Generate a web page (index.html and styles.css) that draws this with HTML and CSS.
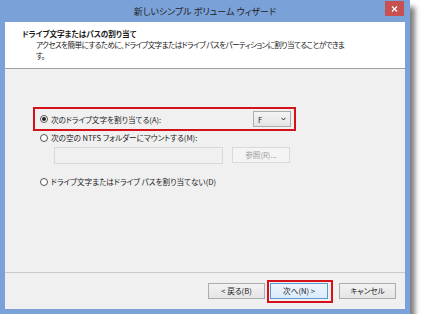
FILE: index.html
```html
<!doctype html>
<html lang="ja">
<head>
  <meta charset="utf-8" />
  <meta name="viewport" content="width=device-width,initial-scale=1" />
  <title>新しいシンプル ボリューム ウィザード</title>
  <link rel="stylesheet" href="styles.css">
</head>
<body>
  <div class="window">
    <!-- title bar -->
    <div class="titlebar">
      <span></span>
      <div class="title">新しいシンプル ボリューム ウィザード</div>
      <button class="close" type="button" aria-label="閉じる">
        <svg width="7" height="6" viewBox="0 0 7 6"><path d="M1 0.5 L6 5.5 M6 0.5 L1 5.5" stroke="#fff" stroke-width="1.3"/></svg>
      </button>
    </div>

    <div class="content">
      <div class="header">
        <div class="heading">ドライブ文字またはパスの割り当て</div>
        <p class="desc">アクセスを簡単にするために、ドライブ文字またはドライブ パスをパーティションに割り当てることができます。</p>
      </div>

      <div class="options">
        <div class="pick mark">
          <label class="radio"><span class="dot on"></span>次のドライブ文字を割り当てる(A):</label>
          <div class="select">
            <span>F</span>
            <svg width="5" height="4" viewBox="0 0 5 4"><path d="M0.5 0.8 L2.5 3 L4.5 0.8" fill="none" stroke="#333" stroke-width="1"/></svg>
          </div>
        </div>

        <label class="radio row"><span class="dot"></span>次の空の NTFS フォルダーにマウントする(M):</label>
        <div class="mount">
          <div class="pathbox"></div>
          <button class="btn" type="button" disabled>参照(R)...</button>
        </div>

        <label class="radio row last"><span class="dot"></span>ドライブ文字またはドライブ パスを割り当てない(D)</label>
      </div>

      <div class="footer">
        <button class="btn" type="button">&lt; 戻る(B)</button>
        <span class="mark next"><button class="btn primary" type="button">次へ(N) &gt;</button></span>
        <button class="btn cancel" type="button">キャンセル</button>
      </div>
    </div>
  </div>
</body>
</html>
```

FILE: styles.css
```css
:root{
  --font: "Noto Sans CJK JP", "Noto Sans", sans-serif;
  --frame: #7aa1d8;
  --face: #f0f0f0;
  --text: #1a1a1a;
  --red: #d5121c;
}

*{ box-sizing:border-box }
body{
  margin:0;
  background:#fff;
  font-family:var(--font);
  font-size:7.6px;
  font-feature-settings:"palt";
  color:var(--text);
}

.window{
  width:410px; height:314px;
  padding:0 5px 5px;
  background:var(--frame);
  box-shadow: 5px 7px 5px rgba(0,0,0,.5);
  display:flex;
  flex-direction:column;
}

/* title bar */
.titlebar{
  height:22px;
  display:grid;
  grid-template-columns:1fr auto 1fr;
}
.title{
  align-self:center;
  font-size:9px;
  color:#222;
  white-space:nowrap;
}
.close{
  justify-self:end;
  width:19px; height:15px;
  margin:1px 1px 0 0;
  padding:0;
  border:0;
  background:#c75050;
  display:grid;
  place-items:center;
}

.content{
  flex:1;
  background:var(--face);
  display:flex;
  flex-direction:column;
}

/* white header strip */
.header{
  height:47px;
  background:#fff;
  border-bottom:1px solid #a0a0a0;
  padding:7px 0 0 17px;
}
.heading{
  font-weight:700;
  line-height:10px;
}
.desc{
  margin:0 0 0 14px;
  width:315px;
  line-height:11px;
  letter-spacing:-.6px;
}

/* options */
.options{
  flex:1;
  padding-top:38px;
}
.mark{
  border:2px solid var(--red);
}
.pick{
  margin-left:28px;
  width:263px;
  padding:2px 3px 2px 5px;
  display:flex;
  align-items:center;
  justify-content:space-between;
}
.radio{
  display:flex;
  align-items:center;
  gap:3px;
  line-height:11px;
  white-space:nowrap;
}
.row{
  margin:1px 0 0 35px;
}
.row.last{ margin-top:12px; }

.dot{
  width:8px; height:8px;
  border-radius:50%;
  border:1px solid #555;
  background:#fff;
  display:grid;
  place-items:center;
}
.dot.on::after{
  content:"";
  width:4px; height:4px;
  border-radius:50%;
  background:#222;
}

.select{
  width:38px; height:16px;
  border:1px solid #acacac;
  background:linear-gradient(#f4f4f4, #e4e4e4);
  padding:0 4px 0 4px;
  display:flex;
  align-items:center;
  justify-content:space-between;
}

.mount{
  margin:4px 0 0 49px;
  display:flex;
  align-items:flex-start;
  gap:9px;
}
.pathbox{
  width:169px; height:17px;
  border:1px solid #d9d9d9;
  background:#f0f0f0;
}

/* buttons */
.btn{
  font:inherit;
  width:57px; height:16px;
  padding:0;
  border:1px solid #acacac;
  border-radius:0;
  background:linear-gradient(#f2f2f2, #e5e5e5);
  color:var(--text);
  line-height:14px;
}
.btn:disabled{
  width:58px;
  border-color:#d9d9d9;
  background:#f4f4f4;
  color:#9a9a9a;
}
.btn.primary{
  width:58px;
  border-color:#5c9ad2;
  background:linear-gradient(#ecf4fc, #dcecfc);
}

.footer{
  height:37px;
  border-top:1px solid #cacaca;
  padding:0 9px 0 0;
  display:flex;
  justify-content:flex-end;
  align-items:center;
  gap:2px;
}
.next{
  padding:1px 3px 2px 1px;
  display:flex;
}
.cancel{ margin-left:4px; }
```
